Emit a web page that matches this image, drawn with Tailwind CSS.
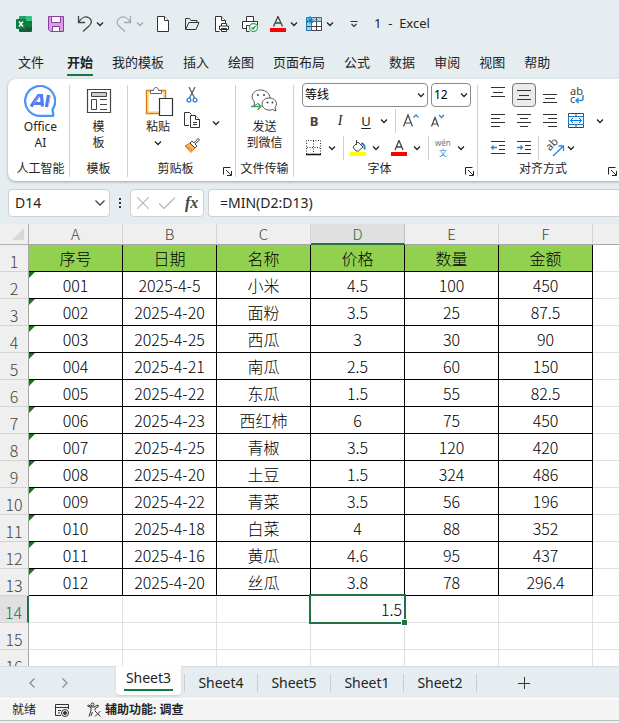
<!DOCTYPE html>
<html lang="zh-CN">
<head>
  <meta charset="UTF-8" />
  <meta name="viewport" content="width=device-width, initial-scale=1.0" />
  <title>1 - Excel</title>
  <script src="https://cdn.jsdelivr.net/npm/@tailwindcss/browser@4"></script>
</head>
<body class="flex h-screen flex-col overflow-hidden bg-[#e5edf0] font-['Noto_Sans','Noto_Sans_CJK_SC',sans-serif] text-xs text-[#242424]">

  <!-- Общие символы -->
  <svg class="hidden">
    <symbol id="chevron" viewBox="0 0 8 8"><path d="M1 2.500l3 3 3-3" fill="none" stroke="currentColor" stroke-width="1.300" /></symbol>
    <symbol id="launcher" viewBox="0 0 9 9"><path d="M.5 7.500V.5h7M3 3l5 5M8.500 4v4.500H4" fill="none" stroke="currentColor" /></symbol>
  </svg>

  <header class="flex h-[48px] shrink-0 items-center pl-4">
    <svg class="size-4" viewBox="0 0 16 16" aria-label="Excel">
      <path d="M3 1a1 1 0 0 1 1-1h6v5H3z" fill="#21a366" /><path d="M10 0h5a1 1 0 0 1 1 1v4h-6z" fill="#33c481" />
      <path d="M3 5h7v6H3z" fill="#185c37" /><path d="M10 5h6v6h-6z" fill="#107c41" /><path d="M3 11h13v4a1 1 0 0 1-1 1H4a1 1 0 0 1-1-1z" fill="#185c37" />
      <rect y="3" width="10" height="10" rx="1" fill="#107c41" /><path d="M3 5.500l4 5M7 5.500l-4 5" stroke="#fff" stroke-width="1.500" />
    </svg>
    <button class="ml-4" aria-label="保存">
      <svg class="size-4" viewBox="0 0 16 16" fill="none" stroke="#8c3aa5"><path d="M.5.5h15v15h-13l-2-2z" fill="#d9a0e0" /><path d="M3.500.5h9v6h-9z" fill="#fff" /><path d="M4.500 15.500v-5h7v5z" fill="#fff" /></svg>
    </button>
    <button class="ml-3" aria-label="撤消">
      <svg class="size-4" viewBox="0 0 16 16" fill="none" stroke="#444" stroke-width="1.300"><path d="M2.500 0v6.500H9M2.500 6.500C5 2 9 0 12.500 1.500c4 2 3.500 6 .500 8.500l-6 5.500" /></svg>
    </button>
    <button class="ml-1" aria-label="撤消选项"><svg class="size-2"><use href="#chevron" /></svg></button>
    <button class="ml-3 text-[#a5abad]" aria-label="恢复">
      <svg class="size-4" viewBox="0 0 16 16" fill="none" stroke="currentColor" stroke-width="1.300"><path d="M14.500 0v6.500H8M14.500 6.500C12 2 8 0 4.500 1.500c-4 2-4.500 6-1.500 8.500l6 5.500" /></svg>
    </button>
    <button class="ml-1 text-[#a5abad]" aria-label="恢复选项"><svg class="size-2"><use href="#chevron" /></svg></button>
    <button class="ml-3" aria-label="新建">
      <svg class="size-4" viewBox="0 0 16 16" fill="#fff" stroke="#333"><path d="M1.500.5h7l4 4v11h-11z" /><path d="M8.500.5v4h4" /></svg>
    </button>
    <button class="ml-3" aria-label="打开">
      <svg class="h-4 w-[18px]" viewBox="0 0 18 16" fill="none" stroke="#333"><path d="M1.500 13V2.500h4l1.500 2h6v2M1.500 13.500h10.500l3-7H5z" stroke-linejoin="round" /></svg>
    </button>
    <button class="ml-3" aria-label="打印预览">
      <svg class="size-4" viewBox="0 0 16 16" fill="#fff" stroke="#333"><path d="M5.500 15.500h-4V.5h6l4 4v3" /><path d="M7.500.5v4h4" /><path d="M7.500 10V7.500h5V10M5.500 13.500V10h9v3.500zM7.500 12.500h5v3h-5z" /></svg>
    </button>
    <button class="ml-3" aria-label="快速打印">
      <svg class="size-4" viewBox="0 0 16 16" fill="#fff" stroke="#333"><path d="M4.500 5V.5h7V5M4 12.500H.5V5.500h15V9M4.500 15.500v-6h4M4.500 15.500h3" /><circle cx="11.500" cy="11.500" r="4" stroke="#4da764" stroke-width="1.300" /><path d="M9.500 11.500l1.500 1.500 2.500-3" fill="none" stroke="#2f9148" stroke-width="1.300" /></svg>
    </button>
    <button class="ml-3" aria-label="字体颜色">
      <svg class="size-4" viewBox="0 0 16 16"><path d="M3.500 10.500L8 .5l4.500 10M5 7h6" fill="none" stroke="#444" stroke-width="1.300" /><path d="M0 12h16v4H0z" fill="#f00" /></svg>
    </button>
    <button class="ml-1" aria-label="字体颜色选项"><svg class="size-2"><use href="#chevron" /></svg></button>
    <button class="ml-2" aria-label="冻结窗格">
      <svg class="size-4" viewBox="0 0 16 16"><path d="M.5 1.500h15v13H.5z" fill="#fff" stroke="#444" /><path d="M0 1h16v4.500H5.500V15H0z" fill="#9fd0f2" /><path d="M5.500 1v14M10.500 1v14M0 5.500h16M0 10.500h16" stroke="#444" /><path d="M.5 14.500v-13h15v4h-10v9z" fill="none" stroke="#1b78c2" /><path d="M4 0v8M0 4h8M1 1l6 6M7 1L1 7" stroke="#1b88d2" /></svg>
    </button>
    <button class="ml-1" aria-label="冻结窗格选项"><svg class="size-2"><use href="#chevron" /></svg></button>
    <button class="ml-4" aria-label="自定义快速访问工具栏"><svg class="size-2" viewBox="0 0 8 8" fill="none" stroke="#333" stroke-width="1.200"><path d="M.5 1.500h7M1.500 4l2.500 2.500L6.500 4" /></svg></button>
    <h1 class="ml-4 whitespace-pre text-[13px]">1  -  Excel</h1>
  </header>

  <nav class="flex h-[31px] shrink-0 items-start gap-[19px] overflow-hidden whitespace-nowrap pl-[18px] text-[13px] leading-[28px]">
    <a href="#" class="mr-1">文件</a>
    <a href="#" class="h-[28px] border-b-2 border-[#107c41] font-bold">开始</a>
    <a href="#">我的模板</a>
    <a href="#">插入</a>
    <a href="#">绘图</a>
    <a href="#">页面布局</a>
    <a href="#">公式</a>
    <a href="#">数据</a>
    <a href="#">审阅</a>
    <a href="#">视图</a>
    <a href="#">帮助</a>
  </nav>

  <!-- Лента -->
  <section class="ml-2 flex h-[102px] shrink-0 items-stretch overflow-hidden rounded-l-lg bg-white pt-[6px] pb-1 leading-4 shadow-[0_1px_3px_rgba(0,0,0,0.3)]">
    <div class="flex w-[62px] shrink-0 flex-col items-center border-r border-[#d1d1d1] pl-1">
      <button class="flex flex-1 flex-col items-center">
        <svg class="mb-0.5 size-8" viewBox="0 0 32 32"><path d="M30 31H16A15 15 0 1 1 28.500 24.500L29.500 31z" fill="#fff" stroke="#4a97f5" stroke-width="2.300" /><path d="M7 21.500L14.500 10.500h3l1 11M10 18.500h8M24.500 10l-2 12" fill="none" stroke="#4d7df0" stroke-width="3.200" /><path d="M15 11l-5 7.500" stroke="#9a8cf5" stroke-width="1.500" /><path d="M26.500 10.500l-2 11" stroke="#f0b090" stroke-width="1" /></svg>
        <span>Office<br>AI</span>
      </button>
      <h2 class="whitespace-nowrap">人工智能</h2>
    </div>

    <div class="flex w-[58px] shrink-0 flex-col items-center border-r border-[#d1d1d1]">
      <button class="flex flex-1 flex-col items-center">
        <svg class="mb-0.5 size-8" viewBox="0 0 32 32" fill="none" stroke="#444"><path d="M4.500 4.500h23v23h-23z" stroke-width="1.200" /><path d="M8.500 7.500h15v4h-15z" fill="#ccc" /><path d="M8.500 14.500h5v10h-5zM17 14.500h7M17 19.500h7M17 24.500h7" /></svg>
        <span>模<br>板</span>
      </button>
      <h2>模板</h2>
    </div>

    <div class="flex w-[108px] shrink-0 flex-col border-r border-[#d1d1d1]">
      <div class="flex flex-1">
        <button class="ml-3 flex w-[36px] flex-col items-center">
          <svg class="mb-0.5 size-8" viewBox="0 0 32 32" fill="#fff"><path d="M4.500 5.500h19v23h-19z" fill="#fbe3a4" stroke="#e07b16" stroke-width="1.400" /><path d="M7 8h14v18H7z" /><path d="M8.500 8.500v-3h3c0-4 5-4 5 0h3v3z" stroke="#666" /><path d="M17.500 13.500h13v17h-13z" stroke="#333" stroke-width="1.200" /></svg>
          <span>粘贴</span>
          <svg class="mt-1 size-2"><use href="#chevron" /></svg>
        </button>
        <div class="ml-2 flex flex-col items-center gap-[9px] pt-0.5">
          <button aria-label="剪切"><svg class="size-4" viewBox="0 0 16 16" fill="none"><path d="M5 0l5.500 11M11 0L5.500 11" stroke="#555" stroke-width="1.200" /><circle cx="5" cy="13" r="1.900" stroke="#2b88d8" stroke-width="1.300" /><circle cx="11" cy="13" r="1.900" stroke="#2b88d8" stroke-width="1.300" /></svg></button>
          <button aria-label="复制"><svg class="size-4" viewBox="0 0 16 16" fill="#fff" stroke="#333"><path d="M5 13.500H.5V.5h5l2 2" /><path d="M6.500 3.500h5l4 4v8h-9z" /><path d="M11.500 3.500v4h4M9 10.500h4M9 12.500h4" /></svg></button>
          <button aria-label="格式刷"><svg class="size-4" viewBox="0 0 16 16"><path d="M1 9l5-3 5 5-4 4.500z" fill="#f8b25c" stroke="#e07b16" /><path d="M1 9l7 4" stroke="#e07b16" /><path d="M6 6l2-2 2 2 4-4.500 1.500 1.500L11 7l2 2-2 2z" fill="#fff" stroke="#444" /></svg></button>
        </div>
        <button class="ml-3 self-center" aria-label="复制选项"><svg class="size-2"><use href="#chevron" /></svg></button>
      </div>
      <div class="flex items-center pr-[3px]"><h2 class="flex-1 text-center">剪贴板</h2><button aria-label="剪贴板选项"><svg class="mt-1 size-[9px]"><use href="#launcher" /></svg></button></div>
    </div>

    <div class="flex w-[58px] shrink-0 flex-col items-center border-r border-[#d1d1d1]">
      <button class="flex flex-1 flex-col items-center">
        <svg class="mb-0.5 size-8" viewBox="0 0 32 32" fill="#fff" stroke="#555"><path d="M9 19l-3 2 .5-4C.5 10 7 4.500 13 5c5 0 9 4 9 8" /><path d="M27 22.500c4-5-1-10-6-9.500-5 0-8 4-6.500 8 2 4 7 5 10 3.500l3.500 1.500z" /><g fill="#444" stroke="none"><circle cx="10" cy="10" r="1" /><circle cx="16" cy="10" r="1" /><circle cx="19.500" cy="17.500" r="1" /><circle cx="24.500" cy="17.500" r="1" /></g><path d="M3 21.500h9M9.500 18l3.500 3.500L9.500 25" fill="none" stroke="#3fa35b" stroke-width="1.300" /></svg>
        <span>发送<br>到微信</span>
      </button>
      <h2>文件传输</h2>
    </div>

    <div class="flex w-[184px] shrink-0 flex-col border-r border-[#d1d1d1] pl-2">
      <div class="-mt-0.5 flex gap-[3px]">
        <div class="relative">
          <select aria-label="字体" class="h-6 w-[126px] appearance-none rounded border border-[#8a8a8a] bg-white pl-0.5 text-black"><option>等线</option></select>
          <svg class="pointer-events-none absolute top-2 right-[3px] size-2"><use href="#chevron" /></svg>
        </div>
        <div class="relative">
          <select aria-label="字号" class="h-6 w-[40px] appearance-none rounded border border-[#8a8a8a] bg-white pl-0.5 text-black"><option>12</option></select>
          <svg class="pointer-events-none absolute top-2 right-[3px] size-2"><use href="#chevron" /></svg>
        </div>
      </div>
      <div class="flex h-[28px] items-center text-sm">
        <button class="w-6 text-[13px] font-bold text-[#444]">B</button>
        <button class="w-7 font-['Liberation_Serif',serif] italic">I</button>
        <button class="w-6 text-[13px] underline underline-offset-2">U</button>
        <button class="ml-0.5" aria-label="下划线选项"><svg class="size-2"><use href="#chevron" /></svg></button>
        <span class="ml-[7px] h-6 w-px bg-[#d1d1d1]"></span>
        <button class="ml-1.5" aria-label="增大字号"><svg class="size-[18px]" viewBox="0 0 18 18" fill="none"><path d="M1.500 14.500L6 3l4.500 11.500M3 11h6" stroke="#444" stroke-width="1.200" /><path d="M11.500 5.500L14 3l2.500 2.500" stroke="#2b88d8" stroke-width="1.300" /></svg></button>
        <button class="ml-2" aria-label="减小字号"><svg class="size-[18px]" viewBox="0 0 18 18" fill="none"><path d="M3.500 14.500L7 5.500l3.500 9M5 12h4" stroke="#444" stroke-width="1.200" /><path d="M11 3l2.500 2.500L16 3" stroke="#2b88d8" stroke-width="1.300" /></svg></button>
      </div>
      <div class="flex flex-1 items-center">
        <button class="ml-1" aria-label="边框"><svg class="size-4" viewBox="0 0 16 16" fill="none"><path d="M.5 14V.5h14V14M7.500 1v13M1 7.500h13" stroke="#333" stroke-dasharray="1 1.500" /><path d="M0 14.500h15" stroke="#111" stroke-width="1.500" /></svg></button>
        <button class="ml-1.5" aria-label="边框选项"><svg class="size-2"><use href="#chevron" /></svg></button>
        <span class="ml-[7px] h-6 w-px bg-[#d1d1d1]"></span>
        <button class="ml-1.5" aria-label="填充颜色"><svg class="size-4" viewBox="0 0 16 16"><path d="M3 7l5-5 5 5-4.500 4H6z" fill="#fff" stroke="#444" /><path d="M6.500 0v5" stroke="#444" /><path d="M11 3.500c3 0 4 2.500 3.500 6" fill="none" stroke="#2b78b8" stroke-width="1.800" /><path d="M0 12h16v4H0z" fill="#ff0" /></svg></button>
        <button class="ml-1.5" aria-label="填充颜色选项"><svg class="size-2"><use href="#chevron" /></svg></button>
        <button class="ml-[11px]" aria-label="字体颜色"><svg class="size-4" viewBox="0 0 16 16"><path d="M4 10L8 .5 12 10M5.500 7h5" fill="none" stroke="#444" stroke-width="1.300" /><path d="M0 12h16v4H0z" fill="#f00" /></svg></button>
        <button class="ml-1.5" aria-label="字体颜色选项"><svg class="size-2"><use href="#chevron" /></svg></button>
        <span class="ml-[7px] h-6 w-px bg-[#d1d1d1]"></span>
        <button class="ml-1.5 flex flex-col items-center text-[8px] leading-[10px] text-[#777]"><span>wén</span><span class="text-[#2b88d8]">文</span></button>
        <button class="ml-1.5" aria-label="拼音选项"><svg class="size-2"><use href="#chevron" /></svg></button>
      </div>
      <div class="flex items-center pr-[3px]"><h2 class="-ml-2 flex-1 text-center">字体</h2><button aria-label="字体设置"><svg class="mt-1 size-[9px]"><use href="#launcher" /></svg></button></div>
    </div>

    <div class="flex min-w-[142px] flex-1 flex-col">
      <div class="-mt-0.5 flex h-6 items-center gap-0.5 pl-2">
        <button class="flex size-6 items-center justify-center" aria-label="顶端对齐"><svg class="size-4" viewBox="0 0 16 16" stroke="#333"><path d="M1 .5h14M3 5.500h10M1 9.500h14" /></svg></button>
        <button class="flex size-6 items-center justify-center rounded border border-[#777] bg-[#ebebeb]" aria-label="垂直居中"><svg class="size-4" viewBox="0 0 16 16" stroke="#333"><path d="M1 3.500h14M3 8.500h10M1 12.500h14" /></svg></button>
        <button class="flex size-6 items-center justify-center" aria-label="底端对齐"><svg class="size-4" viewBox="0 0 16 16" stroke="#333"><path d="M1 7.500h14M3 11.500h10M1 15.500h14" /></svg></button>
        <button class="relative size-6 pl-1.5 text-left text-[11px] leading-2 text-[#444]" aria-label="自动换行"><span>ab<br>c</span><svg class="absolute right-1 bottom-0.5 size-2.5" viewBox="0 0 10 10" fill="none" stroke="#2b88d8" stroke-width="1.500"><path d="M9 0v3.500q0 2-2 2H2M4.500 3L2 5.500 4.500 8" /></svg></button>
      </div>
      <div class="flex h-[28px] items-center gap-0.5 pl-2">
        <button class="flex size-6 items-center justify-center" aria-label="左对齐"><svg class="size-4" viewBox="0 0 16 16" stroke="#333"><path d="M1 1.500h14M1 5.500h9M1 9.500h14M1 13.500h9" /></svg></button>
        <button class="flex size-6 items-center justify-center" aria-label="居中"><svg class="size-4" viewBox="0 0 16 16" stroke="#333"><path d="M1 1.500h14M4 5.500h8M1 9.500h14M4 13.500h8" /></svg></button>
        <button class="flex size-6 items-center justify-center" aria-label="右对齐"><svg class="size-4" viewBox="0 0 16 16" stroke="#333"><path d="M1 1.500h14M6 5.500h9M1 9.500h14M6 13.500h9" /></svg></button>
        <button class="flex size-6 items-center justify-center" aria-label="合并后居中"><svg class="size-4" viewBox="0 0 16 16" fill="none"><path d="M.5.5h15v14H.5zM8 1v3M8 12v3" stroke="#444" /><path d="M.5 3.500h15v8H.5z" fill="#dff0fc" stroke="#1b78c2" /><path d="M2.500 7.500h11M5 5L2.500 7.500 5 10M11 5l2.500 2.500L11 10" stroke="#1b78c2" /></svg></button>
        <button class="ml-1.5" aria-label="合并选项"><svg class="size-2"><use href="#chevron" /></svg></button>
      </div>
      <div class="flex flex-1 items-center gap-0.5 pl-2">
        <button class="flex size-6 items-center justify-center" aria-label="减少缩进量"><svg class="size-4" viewBox="0 0 16 16" fill="none" stroke="#333"><path d="M1 1.500h14M9 5.500h6M9 9.500h6M1 13.500h14" /><path d="M7 7.500H1.500M3.500 5.500l-2 2 2 2" stroke="#2b88d8" stroke-width="1.300" /></svg></button>
        <button class="flex size-6 items-center justify-center" aria-label="增加缩进量"><svg class="size-4" viewBox="0 0 16 16" fill="none" stroke="#333"><path d="M1 1.500h14M9 5.500h6M9 9.500h6M1 13.500h14" /><path d="M1 7.500h5.500M4.500 5.500l2 2-2 2" stroke="#2b88d8" stroke-width="1.300" /></svg></button>
        <span class="h-6 w-px bg-[#d1d1d1]"></span>
        <button class="relative size-6" aria-label="方向"><span class="absolute top-0 left-1 -rotate-45 text-[11px] text-[#444]">ab</span><svg class="absolute right-0 bottom-0.5 size-4" viewBox="0 0 16 16" fill="none" stroke="#2b88d8" stroke-width="1.300"><path d="M4 14L14.500 4M9.500 4h5v5" /></svg></button>
        <button aria-label="方向选项"><svg class="size-2"><use href="#chevron" /></svg></button>
      </div>
      <div class="flex items-center pr-[3px]"><h2 class="flex-1 text-center">对齐方式</h2><button aria-label="对齐设置"><svg class="mt-1 size-[9px]"><use href="#launcher" /></svg></button></div>
    </div>
  </section>

  <!-- Строка формул -->
  <section class="flex h-[43px] shrink-0 items-center pl-2 text-sm">
    <div class="relative">
      <input aria-label="名称框" value="D14" class="block h-7 w-[102px] rounded border border-[#d0d0d0] bg-white pl-1.5">
      <svg class="absolute top-2.5 right-1 h-2 w-3" viewBox="0 0 12 8" fill="none" stroke="#444" stroke-width="1.300"><path d="M1.500 1.500L6 6l4.500-4.500" /></svg>
    </div>
    <svg class="mx-2 h-3 w-1" viewBox="0 0 4 12" fill="#333"><path d="M1 1h2v2H1zM1 5h2v2H1zM1 9h2v2H1z" /></svg>
    <div class="flex h-7 w-[74px] items-center gap-2.5 rounded border border-[#d0d0d0] bg-white pl-1.5">
      <button aria-label="取消"><svg class="h-3 w-3" viewBox="0 0 12 12" stroke="#b8b8b8" stroke-width="1.200"><path d="M0 0l12 12M12 0L0 12" /></svg></button>
      <button aria-label="输入"><svg class="h-3 w-4" viewBox="0 0 16 12" fill="none" stroke="#b8b8b8" stroke-width="1.300"><path d="M0 6.500l5 5L16 .5" /></svg></button>
      <button class="font-['Liberation_Serif',serif] text-base leading-5 font-bold italic text-[#444]">fx</button>
    </div>
    <input aria-label="编辑栏" value="=MIN(D2:D13)" class="ml-1 h-7 min-w-0 flex-1 rounded-l border border-r-0 border-[#d0d0d0] bg-white pl-[11px]">
  </section>

  <!-- Таблица -->
  <main class="-mt-1 min-h-0 flex-1 overflow-hidden pt-1">
    <table class="w-full table-fixed border-separate border-spacing-0 bg-white font-['Noto_Sans_CJK_SC',sans-serif] text-base font-light text-black">
      <colgroup>
        <col class="w-[29px]">
        <col class="w-[94px]"><col class="w-[94px]"><col class="w-[94px]"><col class="w-[94px]"><col class="w-[94px]"><col class="w-[94px]">
        <col>
      </colgroup>
      <thead>
        <tr id="letters"></tr>
      </thead>
      <tbody id="rows"></tbody>
    </table>
  </main>

  <!-- Листы -->
  <nav class="flex h-8 shrink-0 border-t border-[#d6dadc] text-sm">
    <div class="flex w-[116px] shrink-0 items-center gap-[25px] pl-7 text-[#8a9092]">
      <button aria-label="上一张"><svg class="h-3 w-2" viewBox="0 0 8 12" fill="none" stroke="currentColor" stroke-width="1.300"><path d="M6.500 1.500L2 6l4.500 4.500" /></svg></button>
      <button aria-label="下一张"><svg class="h-3 w-2" viewBox="0 0 8 12" fill="none" stroke="currentColor" stroke-width="1.300"><path d="M1.500 1.500L6 6l-4.500 4.500" /></svg></button>
    </div>
    <button class="-mt-px mr-[3px] h-[29px] w-[65px] shrink-0 rounded-b bg-white px-2 pb-1 shadow-sm"><span class="block border-b-2 border-[#107c41] leading-[23px]">Sheet3</span></button>
    <div class="flex items-center">
      <button class="h-[18px] w-[74px] border-x border-[#c8cdd0] leading-4">Sheet4</button>
      <button class="h-[18px] w-[73px] border-r border-[#c8cdd0] leading-4">Sheet5</button>
      <button class="h-[18px] w-[73px] border-r border-[#c8cdd0] leading-4">Sheet1</button>
      <button class="h-[18px] w-[73px] border-r border-[#c8cdd0] leading-4">Sheet2</button>
      <button class="ml-[41px]" aria-label="新工作表"><svg class="size-3" viewBox="0 0 12 12" stroke="#333"><path d="M6.500 0v12M0 6.500h12" /></svg></button>
    </div>
  </nav>

  <footer class="flex h-[25px] shrink-0 items-center border-t border-white bg-[#f4f4f4] pb-[3px] pl-3 shadow-[inset_0_-2px_0_#f0f0f0,inset_0_-3px_0_#bdbdbd]">
    <span>就绪</span>
    <button class="ml-[18px]" aria-label="录制宏"><svg class="size-4" viewBox="0 0 16 16" fill="none" stroke="#333"><path d="M7 13.500H1.500v-11h13V7M1.500 5.500h13M4 8.500h3M4 11h2" /><circle cx="11" cy="11" r="3.500" /><circle cx="11" cy="11" r="1.500" fill="#333" /></svg></button>
    <button class="ml-4 flex items-center gap-[3px] font-bold"><svg class="size-4" viewBox="0 0 16 16" fill="none" stroke="#333"><circle cx="6.500" cy="2.500" r="1.500" /><path d="M1.500 4l3.500 1.500v3L3 14.500M1.500 4l1-1L6 5h2l4-2 .5 1.500L9 6.500v2M5 14l1.500-4M9 9l5.500 5.500M14.500 9L9 14.500" /></svg>辅助功能: 调查</button>
  </footer>

  <script>
    const letters = ['A', 'B', 'C', 'D', 'E', 'F'];
    const data = [
      ['序号', '日期', '名称', '价格', '数量', '金额'],
      ['001', '2025-4-5', '小米', '4.5', '100', '450'],
      ['002', '2025-4-20', '面粉', '3.5', '25', '87.5'],
      ['003', '2025-4-25', '西瓜', '3', '30', '90'],
      ['004', '2025-4-21', '南瓜', '2.5', '60', '150'],
      ['005', '2025-4-22', '东瓜', '1.5', '55', '82.5'],
      ['006', '2025-4-23', '西红柿', '6', '75', '450'],
      ['007', '2025-4-25', '青椒', '3.5', '120', '420'],
      ['008', '2025-4-20', '土豆', '1.5', '324', '486'],
      ['009', '2025-4-22', '青菜', '3.5', '56', '196'],
      ['010', '2025-4-18', '白菜', '4', '88', '352'],
      ['011', '2025-4-16', '黄瓜', '4.6', '95', '437'],
      ['012', '2025-4-20', '丝瓜', '3.8', '78', '296.4'],
      ['', '', '', '1.5', '', ''],
      ['', '', '', '', '', ''],
      ['', '', '', '', '', '']
    ];

    // Заголовки столбцов
    document.getElementById('letters').innerHTML =
      '<th class="h-[21px] border-r border-b border-[#b0b0b0] bg-[#efefef] p-0"><svg class="ml-3 size-3" viewBox="0 0 12 12"><path d="M12 0v12H0z" fill="#d8d8d8" /></svg></th>' +
      letters.map(l => l === 'D'
        ? '<th class="h-[21px] border-r border-b-2 border-r-[#c0c0c0] border-b-[#217346] bg-[#e0e0e0] p-0 text-[15px] leading-[19px] font-light text-[#217346]">D</th>'
        : `<th class="h-[21px] border-r border-b border-r-[#d4d4d4] border-b-[#a6a6a6] bg-[#efefef] p-0 text-[15px] leading-5 font-light text-[#444]">${l}</th>`
      ).join('') +
      '<th class="border-b border-[#a6a6a6] bg-[#efefef] p-0"></th>';

    // Строки
    document.getElementById('rows').innerHTML = data.map((row, r) => {
      const head = r === 13
        ? 'border-r-2 border-r-[#217346] bg-[#e0e0e0] text-[#217346]'
        : 'border-r border-r-[#a6a6a6] bg-[#efefef] text-[#444]';
      const cells = row.map((v, c) => {
        if (r === 0) return `<th class="border-r border-b border-black bg-[#92d050] p-0 leading-[26px] font-light">${v}</th>`;
        if (r < 13) {
          const mark = c === 0 ? '<svg class="absolute top-0 left-0 size-1.5" viewBox="0 0 6 6"><path d="M0 0h6L0 6z" fill="#107c10" /></svg>' : '';
          return `<td class="relative border-r border-b border-black p-0 text-center leading-[26px]">${mark}${v}</td>`;
        }
        if (r === 13 && c === 3) {
          return `<td class="relative border-r border-b border-[#e0e0e0] p-0 pr-0.5 text-right leading-[26px]">${v}<div class="absolute -inset-x-0.5 -top-0.5 -bottom-0.5 border-2 border-[#217346]"></div><div class="absolute -right-1 -bottom-1 size-[7px] border border-white bg-[#217346]"></div></td>`;
        }
        return '<td class="border-r border-b border-[#e0e0e0] p-0"></td>';
      }).join('');
      return `<tr class="h-[27px]"><th class="border-b border-b-[#d4d4d4] p-0 pt-1.5 text-center leading-5 font-light ${head}">${r + 1}</th>${cells}<td class="border-b border-[#e0e0e0] p-0"></td></tr>`;
    }).join('');
  </script>

</body>
</html>
